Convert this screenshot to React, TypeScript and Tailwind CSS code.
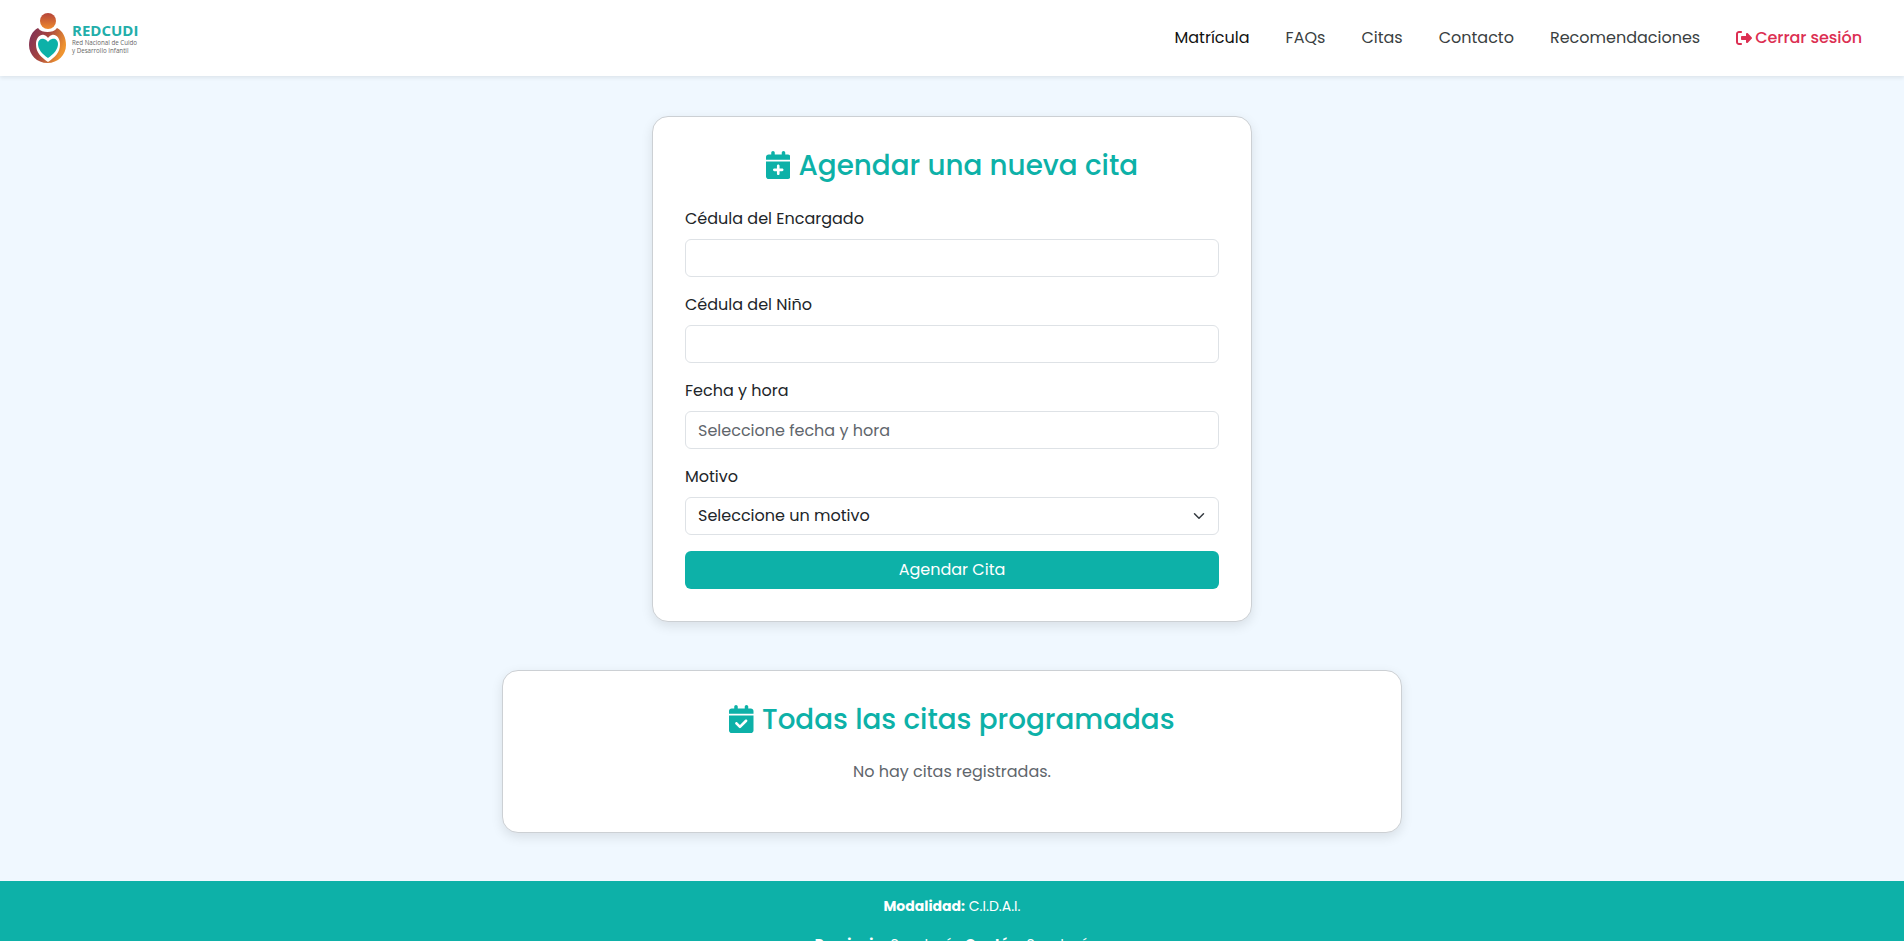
const teal = "text-[#0db1a8]";

function CalendarPlus() {
  return (
    <svg width="24.5" height="28" viewBox="0 0 448 512" fill="#0db1a8" className="inline-block shrink-0 -mt-[2px]">
      <path d="M96 32v32H48C21.5 64 0 85.5 0 112v48h448v-48c0-26.5-21.5-48-48-48h-48V32c0-17.7-14.3-32-32-32s-32 14.3-32 32v32H160V32c0-17.7-14.3-32-32-32S96 14.3 96 32zm352 160H0v272c0 26.5 21.5 48 48 48h352c26.5 0 48-21.5 48-48V192zM224 248c13.3 0 24 10.7 24 24v48h48c13.3 0 24 10.7 24 24s-10.7 24-24 24h-48v48c0 13.3-10.7 24-24 24s-24-10.7-24-24v-48h-48c-13.3 0-24-10.7-24-24s10.7-24 24-24h48v-48c0-13.3 10.7-24 24-24z" />
    </svg>
  );
}

function CalendarCheck() {
  return (
    <svg width="24.5" height="28" viewBox="0 0 448 512" fill="#0db1a8" className="inline-block shrink-0 -mt-[2px]">
      <path d="M128 0c17.7 0 32 14.3 32 32v32h128V32c0-17.7 14.3-32 32-32s32 14.3 32 32v32h48c26.5 0 48 21.5 48 48v48H0v-48c0-26.5 21.5-48 48-48h48V32c0-17.7 14.3-32 32-32zM0 192h448v272c0 26.5-21.5 48-48 48H48c-26.5 0-48-21.5-48-48V192zm329 113c9.4-9.4 9.4-24.6 0-33.9s-24.6-9.4-33.9 0L200 366.1l-47-47c-9.4-9.4-24.6-9.4-33.9 0s-9.4 24.6 0 33.9l64 64c9.4 9.4 24.6 9.4 33.9 0L329 305z" />
    </svg>
  );
}

function Logo() {
  return (
    <div className="flex items-center gap-[6px]">
      <svg width="37" height="50" viewBox="0 0 37 50">
        <defs>
          <linearGradient id="ring" x1="0" y1="0" x2="1" y2="0.4">
            <stop offset="0" stopColor="#7a2f5a" />
            <stop offset="0.5" stopColor="#a5433f" />
            <stop offset="1" stopColor="#ef9430" />
          </linearGradient>
          <linearGradient id="head" x1="0" y1="0" x2="0" y2="1">
            <stop offset="0" stopColor="#b5443a" />
            <stop offset="1" stopColor="#ee8a2e" />
          </linearGradient>
        </defs>
        <circle cx="19" cy="8" r="8" fill="url(#head)" />
        <path d="M9 15 C3 18 0 25 0 32 C0 42 8 50 18.500 50 C29 50 37 42 37 32 C37 25 34 18 28 15 C26 18 22 19 18.500 19 C15 19 11 18 9 15Z" fill="url(#ring)" />
        <path d="M19 49 C12 44 7 40 7 31 C7 25 11 21 15 22 C17 22.500 18 23.500 19 25 C20 23.500 21 22.500 23 22 C27 21 31 25 31 31 C31 40 26 44 19 49Z" fill="#fff" />
        <path d="M19 45 C13 41 9 36 9 31 C9 27 12 25 15 26 C17 26.500 18 27.500 19 29 C20 27.500 21 26.500 23 26 C26 25 29 27 29 31 C29 36 25 41 19 45Z" fill="#0db1a8" />
      </svg>
      <div className="flex flex-col font-['Open_Sans',sans-serif]">
        <span className="text-[15px] leading-[16px] font-bold text-[#22aeaa] mb-[1px]">REDCUDI</span>
        <span className="text-[6.2px] leading-[8px] text-[#666]">Red Nacional de Cuido</span>
        <span className="text-[6.2px] leading-[8px] text-[#666]">y Desarrollo Infantil</span>
      </div>
    </div>
  );
}

function Field({ label, children }: { label: string; children: React.ReactNode }) {
  return (
    <div className="mb-4">
      <label className="block text-[16px] leading-[24px] text-[#212529] mb-2">{label}</label>
      {children}
    </div>
  );
}

const inputCls =
  "block w-full h-[38px] rounded-md border border-[#dee2e6] bg-white px-3 text-[16px] text-[#212529] placeholder:text-[#5f666c] outline-none";

export default function App() {
  return (
    <div className="min-h-screen bg-[#f0f8ff] font-['Poppins','Inter',sans-serif]">
      <nav className="h-[76px] bg-white shadow-[0_2px_4px_rgba(0,0,0,0.08)] flex items-center justify-between pl-[29px] pr-[42px]">
        <Logo />
        <div className="flex items-center gap-9 text-[16px] text-[#3a3f42]">
          <a className="text-[#111]">Matrícula</a>
          <a>FAQs</a>
          <a>Citas</a>
          <a>Contacto</a>
          <a>Recomendaciones</a>
          <a className="flex items-center gap-[3px] font-medium text-[#dc2f52]">
            <svg width="16" height="16" viewBox="0 0 512 512" fill="#dc2f52">
              <path d="M377.900 105.900L500.700 228.700c7.200 7.200 11.300 17.100 11.300 27.300s-4.100 20.100-11.300 27.300L377.900 406.100c-6.400 6.400-15 9.900-24 9.900c-18.700 0-33.900-15.200-33.900-33.900l0-62.100-128 0c-17.700 0-32-14.300-32-32l0-64c0-17.700 14.300-32 32-32l128 0 0-62.100c0-18.700 15.200-33.900 33.900-33.900c9 0 17.600 3.600 24 9.900zM160 96L96 96c-17.700 0-32 14.300-32 32l0 256c0 17.700 14.300 32 32 32l64 0c17.700 0 32 14.300 32 32s-14.300 32-32 32l-64 0c-53 0-96-43-96-96L0 128C0 75 43 32 96 32l64 0c17.700 0 32 14.300 32 32s-14.300 32-32 32z" />
            </svg>
            <span className="tracking-[-0.05px]">Cerrar sesión</span>
          </a>
        </div>
      </nav>

      <main className="flex flex-col items-center pt-10 pb-12">
        <section className="w-[600px] bg-white rounded-2xl border border-[#ccd0d4] shadow-[0_4px_12px_rgba(0,0,0,0.1)] p-8 mb-12">
          <h2 className={`flex items-center justify-center gap-[8px] text-[27.8px] leading-[34px] font-medium mb-6 ${teal}`}>
            <CalendarPlus />
            Agendar una nueva cita
          </h2>
          <Field label="Cédula del Encargado">
            <input className={inputCls} />
          </Field>
          <Field label="Cédula del Niño">
            <input className={inputCls} />
          </Field>
          <Field label="Fecha y hora">
            <input className={inputCls} placeholder="Seleccione fecha y hora" />
          </Field>
          <Field label="Motivo">
            <div className="relative">
              <select className={`${inputCls} appearance-none`} defaultValue="">
                <option value="">Seleccione un motivo</option>
              </select>
              <svg className="absolute right-[14px] top-[13px]" width="12" height="12" viewBox="0 0 16 16" fill="none" stroke="#343a40" strokeWidth="2" strokeLinecap="round" strokeLinejoin="round">
                <path d="m2 5 6 6 6-6" />
              </svg>
            </div>
          </Field>
          <button type="button" className="block w-full h-[38px] rounded-md bg-[#0db1a8] text-white text-[16px]">
            Agendar Cita
          </button>
        </section>

        <section className="w-[900px] bg-white rounded-2xl border border-[#ccd0d4] shadow-[0_4px_12px_rgba(0,0,0,0.1)] pt-8 pb-[48px] text-center">
          <h2 className={`flex items-center justify-center gap-[8px] text-[27.8px] leading-[34px] font-medium mb-[23px] ${teal}`}>
            <CalendarCheck />
            Todas las citas programadas
          </h2>
          <p className="text-[16px] leading-[24px] text-[#5f666c]">No hay citas registradas.</p>
        </section>
      </main>

      <footer className="bg-[#0db1a8] text-white text-center text-[14px] leading-[21px] pt-[15px] pb-6">
        <p className="mb-[17px]"><strong className="font-bold">Modalidad:</strong> C.I.D.A.I.</p>
        <p className="mb-4">
          <strong className="font-bold">Provincia:</strong> San José <strong className="font-bold ml-2">Cantón:</strong> San José
        </p>
      </footer>
    </div>
  );
}
